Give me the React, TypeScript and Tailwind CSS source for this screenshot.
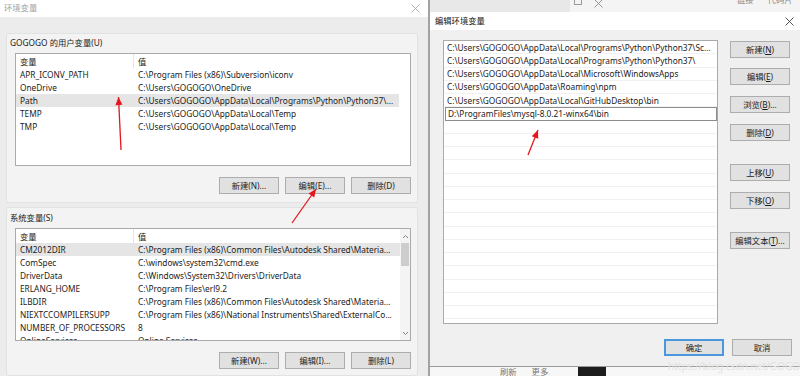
import React from 'react';

type Row = [string, string];

const userVars: Row[] = [
  ['APR_ICONV_PATH', 'C:\\Program Files (x86)\\Subversion\\iconv'],
  ['OneDrive', 'C:\\Users\\GOGOGO\\OneDrive'],
  ['Path', 'C:\\Users\\GOGOGO\\AppData\\Local\\Programs\\Python\\Python37\\...'],
  ['TEMP', 'C:\\Users\\GOGOGO\\AppData\\Local\\Temp'],
  ['TMP', 'C:\\Users\\GOGOGO\\AppData\\Local\\Temp'],
];

const sysVars: Row[] = [
  ['CM2012DIR', 'C:\\Program Files (x86)\\Common Files\\Autodesk Shared\\Materia...'],
  ['ComSpec', 'C:\\windows\\system32\\cmd.exe'],
  ['DriverData', 'C:\\Windows\\System32\\Drivers\\DriverData'],
  ['ERLANG_HOME', 'C:\\Program Files\\erl9.2'],
  ['ILBDIR', 'C:\\Program Files (x86)\\Common Files\\Autodesk Shared\\Materia...'],
  ['NIEXTCCOMPILERSUPP', 'C:\\Program Files (x86)\\National Instruments\\Shared\\ExternalCo...'],
  ['NUMBER_OF_PROCESSORS', '8'],
  ['OnlineServices', 'Online Services'],
];

const pathItems = [
  'C:\\Users\\GOGOGO\\AppData\\Local\\Programs\\Python\\Python37\\Sc...',
  'C:\\Users\\GOGOGO\\AppData\\Local\\Programs\\Python\\Python37\\',
  'C:\\Users\\GOGOGO\\AppData\\Local\\Microsoft\\WindowsApps',
  'C:\\Users\\GOGOGO\\AppData\\Roaming\\npm',
  'C:\\Users\\GOGOGO\\AppData\\Local\\GitHubDesktop\\bin',
];

const Close = ({ color }: { color: string }) => (
  <svg width="9" height="9" viewBox="0 0 9 9">
    <path d="M0.5 0.5 L8.5 8.5 M8.5 0.5 L0.5 8.5" stroke={color} strokeWidth="0.9" />
  </svg>
);

const Btn = ({ children, primary }: { children: React.ReactNode; primary?: boolean }) => (
  <div
    className={`flex h-[17px] w-[60px] shrink-0 items-center justify-center whitespace-nowrap bg-[#e1e1e1] leading-[11px] ${
      primary ? 'border-2 border-[#4a97dd]' : 'border border-[#adadad]'
    }`}
  >
    {children}
  </div>
);

const ListView = ({ rows, selected, scroll }: { rows: Row[]; selected: number; scroll?: boolean }) => (
  <div className="ml-[8px] mr-[6px] mt-[4px] flex h-[113px] overflow-hidden border border-[#aaaaaa] bg-white">
    <div className="flex min-w-0 flex-1 flex-col">
      <div className="flex h-[14px] shrink-0 items-center leading-[11px]">
        <div className="flex h-full w-[118px] shrink-0 items-center border-r border-[#e5e5e5] pl-[4px]">变量</div>
        <div className="pl-[4px]">值</div>
      </div>
      {rows.map(([k, v], i) => (
        <div
          key={k}
          className={`flex h-[13px] shrink-0 items-center whitespace-nowrap leading-[11px] ${
            i === selected ? 'bg-[#e5e5e5]' : ''
          }`}
        >
          <div className="w-[118px] shrink-0 pl-[4px]">{k}</div>
          <div className="pl-[4px]">{v}</div>
        </div>
      ))}
    </div>
    {scroll ? (
      <div className="flex w-[10px] shrink-0 flex-col items-center bg-[#f4f4f4]">
        <svg width="7" height="10" viewBox="0 0 7 10" className="mt-[3px]">
          <path d="M1 6 L3.5 3.5 L6 6" stroke="#777" strokeWidth="0.9" fill="none" />
        </svg>
        <div className="mt-[1px] h-[23px] w-[8px] bg-[#cdcdcd]" />
        <div className="flex-1" />
        <svg width="7" height="10" viewBox="0 0 7 10" className="mb-[2px]">
          <path d="M1 4 L3.5 6.5 L6 4" stroke="#777" strokeWidth="0.9" fill="none" />
        </svg>
      </div>
    ) : (
      <div className="w-[11px] shrink-0" />
    )}
  </div>
);

const head = (x1: number, y1: number, x2: number, y2: number, len = 8, w = 3.5) => {
  const dx = x2 - x1;
  const dy = y2 - y1;
  const l = Math.hypot(dx, dy);
  const ux = dx / l;
  const uy = dy / l;
  const bx = x2 - ux * len;
  const by = y2 - uy * len;
  return `${x2},${y2} ${bx - uy * w},${by + ux * w} ${bx + uy * w},${by - ux * w}`;
};

const arrows: [number, number, number, number][] = [
  [121, 150, 118.5, 97],
  [292, 223, 316, 189],
  [528, 155, 538, 130],
];

const App: React.FC = () => {
  return (
    <div className="relative flex h-[376px] w-[800px] overflow-hidden bg-[#f0f0f0] font-['Noto_Sans','Noto_Sans_CJK_SC',sans-serif] text-[8.3px] text-[#1b1b1b]">
      {/* 环境变量 */}
      <div className="flex w-[430px] shrink-0 flex-col border-r-2 border-[#a2a2a2] bg-[#ececec]">
        <div className="flex h-[17px] shrink-0 items-center justify-between bg-white pl-[4px] pr-[8px] text-[#a3a3a3]">
          <span>环境变量</span>
          <Close color="#a8a8a8" />
        </div>

        <div className="ml-[6px] mr-[10px] mt-[16px] flex h-[170px] flex-col rounded-[2px] border border-[#e2e2e2] bg-[#f3f3f3]">
          <div className="ml-[3px] mt-[1px] flex h-[14px] items-center leading-[11px]">GOGOGO 的用户变量(U)</div>
          <ListView rows={userVars} selected={2} />
          <div className="mr-[6px] mt-[11px] flex justify-end gap-[6px]">
            <Btn>新建(N)...</Btn>
            <Btn>编辑(E)...</Btn>
            <Btn>删除(D)</Btn>
          </div>
        </div>

        <div className="ml-[6px] mr-[10px] mt-[4px] flex flex-1 flex-col rounded-[2px] border border-[#e2e2e2] bg-[#f3f3f3]">
          <div className="ml-[3px] mt-[2px] flex h-[14px] items-center leading-[11px]">系统变量(S)</div>
          <ListView rows={sysVars} selected={0} scroll />
          <div className="mr-[6px] mt-[11px] flex justify-end gap-[6px]">
            <Btn>新建(W)...</Btn>
            <Btn>编辑(I)...</Btn>
            <Btn>删除(L)</Btn>
          </div>
        </div>
      </div>

      {/* 右侧 */}
      <div className="flex min-w-0 flex-1 flex-col">
        <div className="flex h-[12px] shrink-0 items-start overflow-hidden bg-[#f4f4f4] text-[#8a8a8a]">
          <div className="h-full w-[140px] bg-[#e8e8e8]" />
          <div className="ml-[4px] mt-[-3px] h-[8px] w-[8px] border border-[#9a9a9a]" />
          <div className="ml-[12px] mt-[-1px]">
            <Close color="#8a8a8a" />
          </div>
          <span className="ml-[134px] mt-[-4px] leading-none">链接</span>
          <span className="ml-[14px] mt-[-4px] leading-none">代码片</span>
        </div>

        <div className="flex h-[355px] shrink-0 flex-col border-b border-[#9a9a9a] bg-[#f0f0f0]">
          <div className="flex h-[18px] shrink-0 items-center justify-between bg-white pl-[5px] pr-[6px] text-[#111]">
            <span>编辑环境变量</span>
            <Close color="#444" />
          </div>

          <div className="flex pl-[13px] pt-[10px]">
            <div className="flex h-[284px] w-[275px] shrink-0 flex-col overflow-hidden border border-[#aaaaaa] bg-white">
              {pathItems.map((p) => (
                <div key={p} className="flex h-[13.25px] shrink-0 items-center whitespace-nowrap border-b border-[#f1f1f1] pl-[3px] leading-[11px]">
                  {p}
                </div>
              ))}
              <div className="flex h-[13.25px] shrink-0 items-center">
                <div className="ml-[1px] flex h-full flex-1 items-center whitespace-nowrap border border-[#8c8c8c] pl-[2px] leading-[11px]">
                  D:\ProgramFiles\mysql-8.0.21-winx64\bin
                </div>
              </div>
              {Array.from({ length: 16 }).map((_, i) => (
                <div key={i} className="h-[13.25px] shrink-0 border-b border-[#f1f1f1]" />
              ))}
            </div>

            <div className="ml-[12px] flex flex-col pt-[1px]">
              <Btn>
                新建(<u>N</u>)
              </Btn>
              <div className="mt-[10px]">
                <Btn>
                  编辑(<u>E</u>)
                </Btn>
              </div>
              <div className="mt-[11px]">
                <Btn>
                  浏览(<u>B</u>)...
                </Btn>
              </div>
              <div className="mt-[11px]">
                <Btn>
                  删除(<u>D</u>)
                </Btn>
              </div>
              <div className="mt-[23px]">
                <Btn>
                  上移(<u>U</u>)
                </Btn>
              </div>
              <div className="mt-[11px]">
                <Btn>
                  下移(<u>O</u>)
                </Btn>
              </div>
              <div className="mt-[23px]">
                <Btn>
                  编辑文本(<u>T</u>)...
                </Btn>
              </div>
            </div>
          </div>

          <div className="mt-[15px] flex justify-end gap-[8px] pr-[8px]">
            <Btn primary>确定</Btn>
            <Btn>取消</Btn>
          </div>
        </div>

        <div className="flex flex-1 items-start overflow-hidden bg-[#f7f7f7] text-[#777]">
          <span className="ml-[70px] mt-[1px] leading-none">刷新</span>
          <span className="ml-[15px] mt-[1px] leading-none">更多</span>
          <div className="ml-[30px] h-full w-[28px] bg-[#1d1d1d]" />
        </div>
      </div>

      <span className="pointer-events-none absolute left-[668px] top-[361px] text-[10px] leading-none text-[#e2e2e2]">
        https://blog.csdn.net/GOGOGO
      </span>

      <svg className="pointer-events-none absolute left-0 top-0" width="800" height="376">
        {arrows.map(([x1, y1, x2, y2], i) => (
          <g key={i}>
            <line x1={x1} y1={y1} x2={x2} y2={y2} stroke="#e3171d" strokeWidth="1.3" />
            <polygon points={head(x1, y1, x2, y2)} fill="#e3171d" />
          </g>
        ))}
      </svg>
    </div>
  );
};

export default App;
